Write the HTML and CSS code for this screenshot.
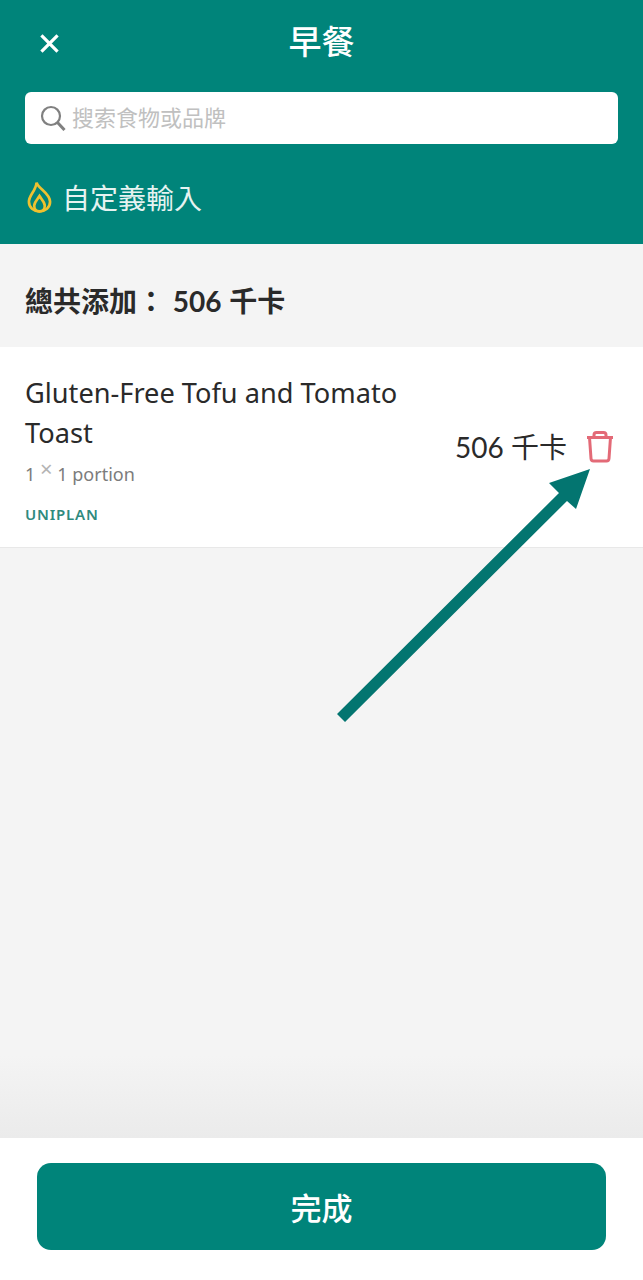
FILE: index.html
```html
<!DOCTYPE html>
<html lang="zh-Hant">
<head>
<meta charset="utf-8">
<title>早餐</title>
<link rel="stylesheet" href="styles.css">
</head>
<body>
<div class="screen">
  <header class="header">
    <div class="topbar">
      <svg class="close" viewBox="0 0 20 20"><path d="M1.500 1.500 18.500 18.500M18.500 1.500 1.500 18.500"/></svg>
      <h1 class="title">早餐</h1>
    </div>
    <div class="search">
      <svg class="search-icon" viewBox="0 0 26 26"><circle cx="11" cy="11" r="9"/><path class="handle" d="m17.500 17.500 7 7.500"/></svg>
      <span class="placeholder">搜索食物或品牌</span>
    </div>
    <div class="custom">
      <svg class="flame" viewBox="0 0 26 34"><path d="M10 2C11 8 24 13 24 22 24 28 19 32 13 32 7 32 2 28 2 22 2 15 9 11 10 2Z"/><path d="M13 16C15.500 20 18.500 22.500 18.500 26 18.500 29.500 16 32 13 32 10 32 7.500 29.500 7.500 26 7.500 22.500 10.500 20 13 16Z"/></svg>
      <span>自定義輸入</span>
    </div>
  </header>
  <section class="total">總共添加： 506 千卡</section>
  <article class="item">
    <div class="item-info">
      <div class="item-name">Gluten-Free Tofu and Tomato Toast</div>
      <div class="item-portion">1 <span class="times">×</span> 1 portion</div>
      <div class="item-brand">UNIPLAN</div>
    </div>
    <div class="item-side">
      <span class="item-kcal">506 千卡</span>
      <svg class="trash" viewBox="0 0 28 32"><path d="M1 6.500H27M3.500 6.500 5 27.500C5.100 29.300 6.200 30 7.500 30H20.500C21.800 30 22.900 29.300 23 27.500L24.500 6.500M8 6.500V4C8 2.500 9 1.500 10.500 1.500H17.500C19 1.500 20 2.500 20 4V6.500"/></svg>
    </div>
  </article>
  <main class="empty"></main>
  <footer class="footer">
    <button class="done">完成</button>
  </footer>
  <svg class="arrow" viewBox="0 0 643 1280"><path d="M337 714 559 493 549 483 590 469 576 509 567 501 345 722Z"/></svg>
</div>
</body>
</html>
```
FILE: styles.css
```css
* { box-sizing: border-box; }
html, body { margin: 0; padding: 0; }
body {
  font-family: "Noto Sans", "Noto Sans CJK TC", sans-serif;
  background: #f4f4f4;
}
.screen {
  position: relative;
  width: 643px;
  height: 1280px;
  display: flex;
  flex-direction: column;
  overflow: hidden;
}
.header {
  height: 244px;
  flex: none;
  background: #00847a;
  padding: 0 25px;
  color: #fff;
}
.topbar {
  height: 92px;
  position: relative;
  display: flex;
  justify-content: center;
  padding-top: 19px;
}
.close {
  position: absolute;
  left: 15px;
  top: 34px;
  width: 19px;
  height: 19px;
  fill: none;
  stroke: #fff;
  stroke-width: 3.400;
}
.title {
  margin: 0;
  font: 500 33px/42px "Noto Sans CJK TC", sans-serif;
}
.search {
  height: 52px;
  background: #fff;
  border-radius: 6px;
  display: flex;
  align-items: center;
  padding-left: 15px;
  padding-bottom: 1px;
  gap: 6px;
}
.search-icon {
  width: 26px;
  height: 26px;
  fill: none;
  stroke: #808080;
  stroke-width: 2.200;
}
.search-icon .handle { stroke-width: 3; }
.placeholder {
  font: 400 22px/30px "Noto Sans CJK TC", sans-serif;
  color: #c0c0c0;
  margin-top: -3px;
}
.custom {
  display: flex;
  align-items: center;
  gap: 10px;
  margin-top: 35px;
  height: 36px;
  padding-left: 2px;
  font: 400 28px/36px "Noto Sans CJK TC", sans-serif;
  color: #e6f3f1;
}
.flame {
  width: 25px;
  height: 34px;
  fill: none;
  stroke: #eec12f;
  stroke-width: 2.800;
}
.total {
  height: 103px;
  flex: none;
  padding: 39px 25px 0;
  font: 700 28px/36px "Lato", "Noto Sans CJK TC", sans-serif;
  word-spacing: 1px;
  color: #2a2a2a;
}
.item {
  height: 201px;
  flex: none;
  background: #fff;
  border-bottom: 1px solid #e8e8e8;
  display: flex;
  justify-content: space-between;
  padding: 26px 29px 0 25px;
}
.item-info { width: 400px; }
.item-name {
  font-size: 27.200px;
  line-height: 40px;
  color: #2a2a2a;
}
.item-portion {
  font-size: 18px;
  line-height: 24px;
  margin-top: 7px;
  color: #7c7c7c;
}
.times {
  font-size: 22px;
  color: #b4b4b4;
  position: relative;
  top: -4px;
}
.item-brand {
  font-size: 15px;
  font-weight: 600;
  letter-spacing: 0.800px;
  line-height: 20px;
  margin-top: 18px;
  color: #2f8a7e;
}
.item-side {
  display: flex;
  align-items: center;
  gap: 19px;
  height: 148px;
}
.item-kcal {
  font: 400 28px/36px "Lato", "Noto Sans CJK TC", sans-serif;
  color: #2a2a2a;
}
.trash {
  width: 28px;
  height: 32px;
  fill: none;
  stroke: #e36a77;
  stroke-width: 3;
}
.empty {
  flex: 1;
  background: linear-gradient(to bottom, #f4f4f4 0, #f4f4f4 86%, #ebebeb 100%);
}
.footer {
  height: 142px;
  flex: none;
  background: #fff;
  padding: 25px 37px 0;
}
.done {
  display: block;
  width: 100%;
  height: 87px;
  border: 0;
  border-radius: 14px;
  background: #00847a;
  color: #fff;
  font: 500 31px/40px "Noto Sans CJK TC", sans-serif;
}
.arrow {
  position: absolute;
  left: 0;
  top: 0;
  width: 643px;
  height: 1280px;
  fill: #037570;
  pointer-events: none;
}
```
